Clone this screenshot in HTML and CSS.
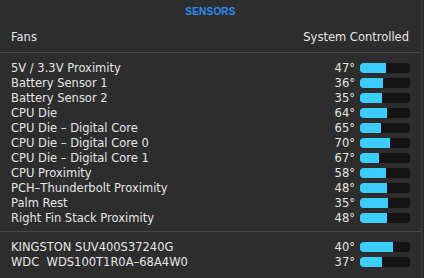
FILE: index.html
```html
<!DOCTYPE html>
<html>
<head>
<meta charset="utf-8">
<link rel="stylesheet" href="styles.css">
</head>
<body>
<div class="panel">
  <div class="title">SENSORS</div>
  <div class="colhead"><span>Fans</span><span>System Controlled</span></div>
  <div class="sep"></div>
  <div class="group">
    <div class="row"><span class="name">5V / 3.3V Proximity</span><span class="temp">47°</span><span class="bar"><span class="fill" style="width:26px"></span></span></div>
    <div class="row"><span class="name">Battery Sensor 1</span><span class="temp">36°</span><span class="bar"><span class="fill" style="width:23px"></span></span></div>
    <div class="row"><span class="name">Battery Sensor 2</span><span class="temp">35°</span><span class="bar"><span class="fill" style="width:22px"></span></span></div>
    <div class="row"><span class="name">CPU Die</span><span class="temp">64°</span><span class="bar"><span class="fill" style="width:27px"></span></span></div>
    <div class="row"><span class="name">CPU Die – Digital Core</span><span class="temp">65°</span><span class="bar"><span class="fill" style="width:21px"></span></span></div>
    <div class="row"><span class="name">CPU Die – Digital Core 0</span><span class="temp">70°</span><span class="bar"><span class="fill" style="width:30px"></span></span></div>
    <div class="row"><span class="name">CPU Die – Digital Core 1</span><span class="temp">67°</span><span class="bar"><span class="fill" style="width:19px"></span></span></div>
    <div class="row"><span class="name">CPU Proximity</span><span class="temp">58°</span><span class="bar"><span class="fill" style="width:26px"></span></span></div>
    <div class="row"><span class="name">PCH–Thunderbolt Proximity</span><span class="temp">48°</span><span class="bar"><span class="fill" style="width:27px"></span></span></div>
    <div class="row"><span class="name">Palm Rest</span><span class="temp">35°</span><span class="bar"><span class="fill" style="width:28px"></span></span></div>
    <div class="row"><span class="name">Right Fin Stack Proximity</span><span class="temp">48°</span><span class="bar"><span class="fill" style="width:27px"></span></span></div>
  </div>
  <div class="sep sep2"></div>
  <div class="group">
    <div class="row"><span class="name">KINGSTON SUV400S37240G</span><span class="temp">40°</span><span class="bar"><span class="fill" style="width:33px"></span></span></div>
    <div class="row"><span class="name">WDC&nbsp; WDS100T1R0A–68A4W0</span><span class="temp">37°</span><span class="bar"><span class="fill" style="width:22px"></span></span></div>
  </div>
</div>
</body>
</html>
```
FILE: styles.css
```css
html, body {
  margin: 0;
  padding: 0;
  background: #2b2b2b;
}
body {
  width: 424px;
  height: 278px;
  overflow: hidden;
  font-family: "Lucida Grande", "DejaVu Sans", sans-serif;
  color: #e6e6e6;
}
.panel {
  width: 421px;
  height: 278px;
  border-right: 1px solid #3c3c3c;
  background: #2d2d2d;
  box-sizing: content-box;
}
.title {
  height: 23px;
  display: flex;
  align-items: center;
  justify-content: center;
  font-family: "Liberation Sans", sans-serif;
  font-weight: bold;
  font-size: 10px;
  letter-spacing: 0.2px;
  color: #2b8df4;
}
.colhead {
  height: 29px;
  display: flex;
  justify-content: space-between;
  align-items: center;
  padding: 0 12px 0 11px;
  font-size: 11.5px;
  margin-top: -1px;
}
.sep {
  height: 1px;
  background: #484848;
  margin-top: 1px;
}
.group {
  padding-top: 7px;
}
.sep2 {
  margin-top: 6px;
}
.row {
  height: 15px;
  display: flex;
  align-items: center;
  padding-left: 11px;
  font-size: 11.5px;
}
.name {
  flex: 1;
  white-space: nowrap;
}
.temp {
  width: 30px;
  text-align: right;
  margin-right: 5px;
}
.bar {
  width: 50px;
  height: 10px;
  border-radius: 3px;
  background: #141414;
  margin-right: 11px;
  overflow: hidden;
  display: flex;
}
.fill {
  height: 10px;
  background: #3bcdfd;
  border-radius: 3px 0 0 3px;
}
```
